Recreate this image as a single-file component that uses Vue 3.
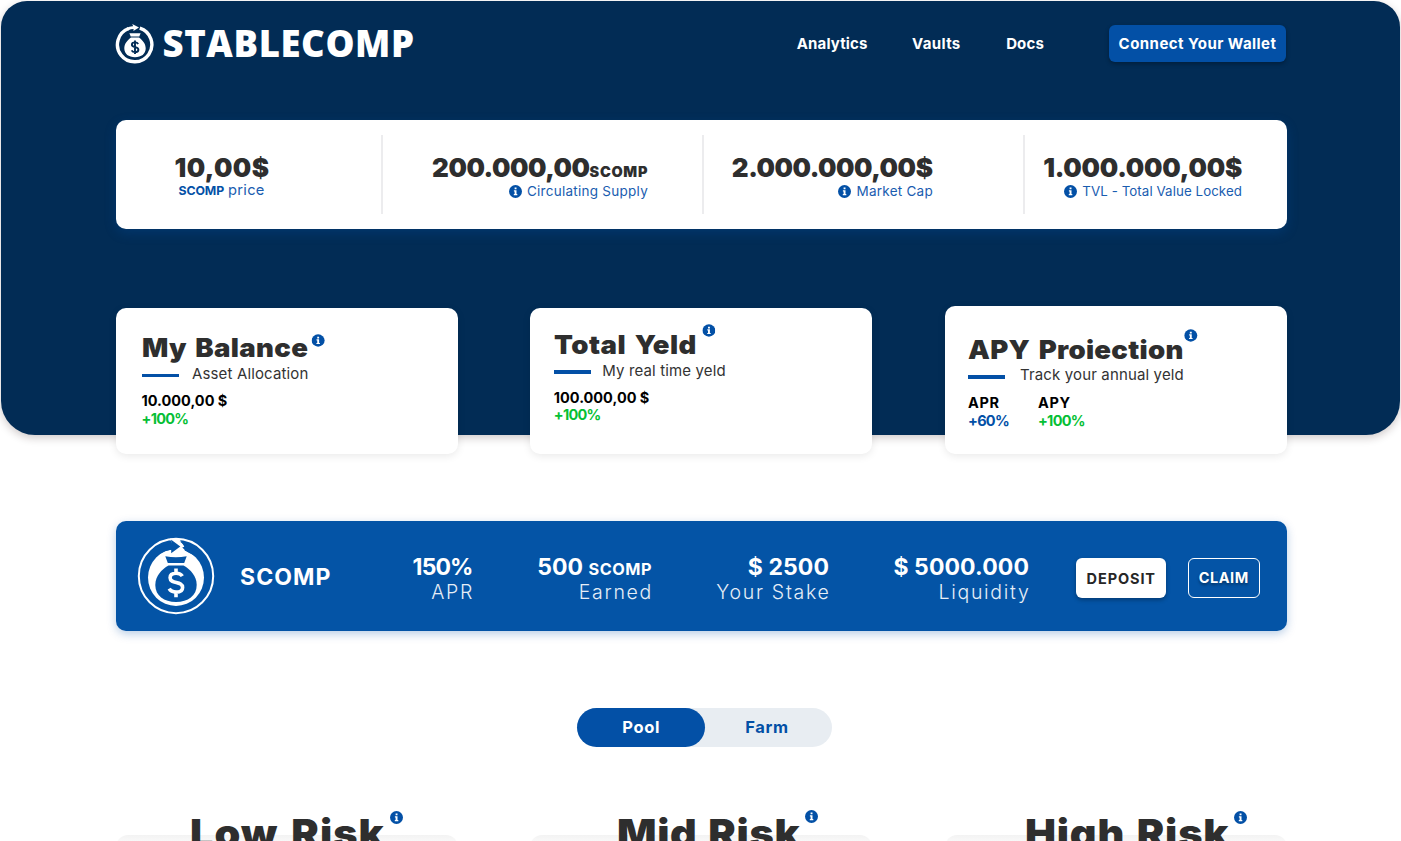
<script setup>
import { h } from 'vue'

const InfoIcon = () =>
  h('svg', { viewBox: '0 0 13 13', class: 'info' }, [
    h('circle', { cx: 6.5, cy: 6.5, r: 6.5, fill: '#0350a6' }),
    h('path', { d: 'M5.6 2.5h1.9v1.8H5.6zM4.9 5.2h2.6v3.9h.8v1.2H4.8V9.1h.8V6.4h-.7z', fill: '#fff' })
  ])

const nav = ['Analytics', 'Vaults', 'Docs']

const cards = [
  { id: 'balance', title: 'My Balance', sub: 'Asset Allocation', values: [{ label: '10.000,00 $', pct: '+100%' }] },
  { id: 'yield', title: 'Total Yeld', sub: 'My real time yeld', values: [{ label: '100.000,00 $', pct: '+100%' }] },
  { id: 'apy', title: 'APY Proiection', sub: 'Track your annual yeld', values: [{ label: 'APR', pct: '+60%', blue: true }, { label: 'APY', pct: '+100%' }] }
]

const risks = [
  { id: 'low', title: 'Low Risk' },
  { id: 'mid', title: 'Mid Risk' },
  { id: 'high', title: 'High Risk' }
]
</script>

<template>
  <div class="page">
    <section class="hero">
      <header class="topbar">
        <div class="brand">
          <svg class="brand-mark" viewBox="0 0 40 40">
            <path d="M24.800 4.200A17.200 17.200 0 1 1 13.600 4.500" fill="none" stroke="#fff" stroke-width="3.400" />
            <path d="M11.800 3.800Q15 1.900 18.200 2.200L17.200 0L24 3.600L18.400 7L18.600 5Q15.800 5 13 6.400Z" fill="#fff" />
            <path d="M14.400 9.300h11.200l-1.300 3.100h-8.600z" fill="#fff" />
            <path d="M16 13.500h8c3.600 2.700 6.700 6.300 6.700 10.800 0 5.800-4.300 8.900-10.700 8.900S9.300 30.100 9.300 24.300c0-4.500 3.100-8.100 6.700-10.800z" fill="#fff" />
            <path d="M23.200 19.900c-.6-1-1.700-1.500-3.200-1.500-1.900 0-3.100.9-3.100 2.300 0 3.400 6.500 1.500 6.500 5 0 1.500-1.300 2.400-3.300 2.400-1.600 0-2.900-.6-3.500-1.700M20 16.400v13.700" fill="none" stroke="#022c55" stroke-width="1.900" />
          </svg>
          <span class="brand-name">STABLECOMP</span>
        </div>
        <nav class="nav">
          <a v-for="item in nav" :key="item" :class="item.toLowerCase()">{{ item }}</a>
        </nav>
        <button class="wallet">Connect Your Wallet</button>
      </header>

      <div class="stats">
        <div class="stat price">
          <div class="figure">10,00$</div>
          <div class="caption"><b>SCOMP</b><span>price</span></div>
        </div>
        <div class="stat supply">
          <div class="figure">200.000,00<small>SCOMP</small></div>
          <div class="caption"><InfoIcon /><span>Circulating Supply</span></div>
        </div>
        <div class="stat cap">
          <div class="figure">2.000.000,00$</div>
          <div class="caption"><InfoIcon /><span>Market Cap</span></div>
        </div>
        <div class="stat tvl">
          <div class="figure">1.000.000,00$</div>
          <div class="caption"><InfoIcon /><span>TVL - Total Value Locked</span></div>
        </div>
      </div>
    </section>

    <section class="cards">
      <article v-for="c in cards" :key="c.id" class="card" :class="c.id">
        <h2>{{ c.title }}<InfoIcon /></h2>
        <div class="sub"><i class="bar"></i><span>{{ c.sub }}</span></div>
        <div class="values">
          <div v-for="v in c.values" :key="v.label" class="value">
            <div class="amount">{{ v.label }}</div>
            <div class="pct" :class="{ blue: v.blue }">{{ v.pct }}</div>
          </div>
        </div>
      </article>
    </section>

    <section class="band">
      <svg class="token" viewBox="0 0 78 78">
        <circle cx="39" cy="39" r="37.200" fill="none" stroke="#fff" stroke-width="2" />
        <ellipse cx="39" cy="40.600" rx="28" ry="28.400" fill="#fff" />
        <path d="M33 1.500H42L47 9L48 15L38 15Z" fill="#fff" />
        <path d="M11 24C15 14 24 7.500 34.200 6.500L34.200 2.800L43.300 9.500L34.200 16.200V12.700C27 13.500 21 16.500 15 24Z" fill="#0454a6" />
        <path d="M42.500 4.200L49 9.300L45.200 10.500L50 14.800L58 19C56 12 50 6.500 42.500 4.200Z" fill="#0454a6" />
        <path d="M28.300 19.300Q39 21.200 49.700 19.300L47.200 26H30.800Z" fill="#0454a6" />
        <path d="M31.500 28.600h15C53.500 32.500 59.700 39.500 59.700 48c0 10.700-8.700 17-20.700 17s-20.700-6.300-20.700-17c0-8.500 6.200-15.500 13.200-19.400z" fill="#0454a6" />
        <path d="M45.300 39.200c-1.100-2-3.200-3-6.200-3-3.700 0-6 1.700-6 4.500 0 6.700 12.500 2.900 12.500 9.700 0 3-2.600 4.700-6.500 4.700-3.200 0-5.700-1.200-6.900-3.400M39 31.500v4.700M39 55v5.200" fill="none" stroke="#fff" stroke-width="3.600" />
      </svg>
      <strong class="token-name">SCOMP</strong>
      <div class="metric m-apr"><b>150%</b><span>APR</span></div>
      <div class="metric m-earned"><b>500 <small>SCOMP</small></b><span>Earned</span></div>
      <div class="metric m-stake"><b>$ 2500</b><span>Your Stake</span></div>
      <div class="metric m-liq"><b>$ 5000.000</b><span>Liquidity</span></div>
      <button class="deposit">DEPOSIT</button>
      <button class="claim">CLAIM</button>
    </section>

    <div class="toggle">
      <button class="on">Pool</button>
      <button>Farm</button>
    </div>

    <section class="risks">
      <article v-for="r in risks" :key="r.id" class="risk" :class="r.id">
        <h2>{{ r.title }}</h2>
        <InfoIcon />
      </article>
    </section>
  </div>
</template>

<style>
body { background: #fff; overflow: hidden; }
</style>

<style scoped>
.page {
  width: 1401px;
  height: 841px;
  overflow: hidden;
  display: flow-root;
  box-sizing: border-box;
  font-family: Inter, "Open Sans", sans-serif;
  white-space: nowrap;
}
button { font: inherit; border: 0; padding: 0; box-sizing: border-box; }
h2 { margin: 0; }
.info { width: 13px; height: 13px; display: block; flex: none; }

.hero {
  box-sizing: border-box;
  width: 1399px;
  height: 434px;
  margin: 1px 0 0 1px;
  padding: 24px 113.500px 0 115px;
  background: #022c55;
  border-radius: 26px 26px 34px 34px;
  box-shadow: 0 3px 8px rgba(40, 20, 20, .22);
}
.topbar { display: flex; height: 36.500px; align-items: center; color: #fff; }
.brand { display: flex; align-items: center; width: 681px; }
.brand-mark { width: 40px; height: 40px; margin: 1px 0 0 -1px; }
.brand-name { font: 800 36.500px/40px "Open Sans", sans-serif; letter-spacing: .6px; margin: 0 0 0 7.500px; }
.nav { display: flex; font-weight: 650; font-size: 15px; width: 312px; margin-top: 1px; }
.nav a { letter-spacing: .15px; }
.nav .vaults { margin-left: 44.500px; letter-spacing: .35px; }
.nav .docs { margin-left: 45.500px; }
.wallet {
  width: 178px;
  height: 36.500px;
  border-radius: 6px;
  background: #0350a6;
  color: #fff;
  font-weight: 650;
  font-size: 15px;
  letter-spacing: .45px;
  padding-top: 1px;
  box-shadow: 0 2px 4px rgba(0, 0, 0, .3);
}

.stats {
  display: grid;
  grid-template-columns: 267px 321px 321px 1fr;
  height: 109.500px;
  margin-top: 58px;
  padding: 15.500px 0;
  box-sizing: border-box;
  background: #fff;
  border-radius: 10px;
  box-shadow: 0 4px 12px rgba(3, 80, 166, .3);
}
.stat { display: flex; flex-direction: column; align-items: flex-end; padding-top: 18.500px; box-sizing: border-box; border-right: 2px solid #ececee; }
.stat.price { align-items: flex-start; padding-left: 58.500px; }
.stat.supply { padding-right: 55px; }
.stat.cap { padding-right: 91px; }
.stat.tvl { padding-right: 45px; border-right: 0; }
.figure { height: 27px; font-weight: 900; font-size: 26px; line-height: 27px; color: #2e2e2e; letter-spacing: -.48px; margin-right: -.48px; }
.price .figure { letter-spacing: .4px; }
.tvl .figure { letter-spacing: -.24px; }
.figure small { font-size: 14.500px; line-height: 1; letter-spacing: .7px; margin-right: -.7px; }
.caption { display: flex; align-items: center; height: 21px; color: #1a5db0; font-size: 13.500px; letter-spacing: .26px; margin-right: -1px; }
.caption .info { margin-right: 5px; }
.caption b { font-size: 12.300px; letter-spacing: -.1px; margin: 1px 4px 0 4px; color: #0350a6; }
.price .caption { height: 19px; }
.price .caption span { font-size: 14.700px; }
.tvl .caption { font-size: 13.300px; letter-spacing: .08px; margin-right: -.5px; }

.cards { display: grid; grid-template-columns: repeat(3, 342px); justify-content: space-between; align-items: end; width: 1170.500px; height: 147.500px; margin: -129px 0 0 116px; }
.card { height: 146px; box-sizing: border-box; background: #fff; border-radius: 10px; padding: 26.500px 0 0 25.500px; box-shadow: 0 2px 8px rgba(0, 0, 0, .09); }
.card.yield { padding: 23px 0 0 23.500px; }
.card.apy { height: 147.500px; padding: 29.500px 0 0 23.500px; }
.card h2 { display: inline-flex; height: 28px; align-items: center; color: #2e2e2e; font-weight: 900; font-size: 26px; line-height: 28px; letter-spacing: .3px; word-spacing: 2.500px; transform: scaleX(1.060); transform-origin: 0 0; }
.card h2 .info { width: 12.300px; margin: -16px 0 0 3.500px; }
.yield h2 { letter-spacing: .45px; }
.yield h2 .info { margin: -29px 0 0 5px; }
.apy h2 { letter-spacing: .27px; }
.apy h2 .info { margin: -29px 0 0 1px; }
.sub { display: flex; align-items: center; height: 22px; margin-top: .5px; font-size: 15px; letter-spacing: .14px; color: #333; }
.bar { width: 37px; height: 3.500px; margin: 3.500px 13.500px 0 0; background: #0350a6; }
.yield .bar { margin-right: 11.500px; }
.apy .bar { margin: 5.500px 15px 0 0; }
.apy .sub { margin-top: -.5px; }
.values { display: flex; gap: 29px; margin-top: 7.500px; font-weight: 700; font-size: 14.500px; line-height: 17.500px; }
.amount { color: #000; }
.apy .values { margin-top: 9px; }
.apy .amount { letter-spacing: .6px; }
.pct { color: #06bf35; font-weight: 650; letter-spacing: -.7px; }
.pct.blue { color: #0350a6; }

.band { display: flex; align-items: center; width: 1170.500px; height: 109.500px; margin: 67.500px 0 0 116px; background: #0454a6; border-radius: 10px; color: #fff; box-shadow: 0 3px 10px rgba(3, 80, 166, .28); }
.token { width: 78px; height: 78px; margin-left: 21px; flex: none; }
.token-name { font-weight: 650; font-size: 23px; letter-spacing: 1.100px; width: 110px; margin: 3px 0 0 25px; }
.metric { display: flex; flex-direction: column; align-items: flex-end; flex: none; box-sizing: border-box; margin-top: 7.500px; }
.metric b { height: 25px; font-weight: 650; font-size: 23px; line-height: 25px; }
.metric span { font-weight: 300; font-size: 19.500px; line-height: 25px; letter-spacing: 1.700px; margin-right: -1.500px; color: #e6eef7; }
.metric small { font-size: 16.300px; line-height: 1; letter-spacing: .5px; margin-right: -.5px; }
.m-apr { width: 122.500px; }
.m-apr b { letter-spacing: -.9px; }
.m-earned { width: 179px; }
.m-stake { width: 177.500px; }
.m-stake b, .m-liq b { letter-spacing: .1px; }
.m-liq { width: 200px; }
.deposit, .claim { height: 40.500px; border-radius: 6px; font-weight: 650; flex: none; margin-top: 4.500px; }
.deposit { width: 89.500px; margin-left: 47px; background: #fff; color: #262626; font-size: 14.500px; letter-spacing: .9px; padding: 1px 0 0 1px; box-shadow: 0 2px 4px rgba(0, 0, 0, .3); }
.claim { width: 71.500px; margin-left: 22.500px; background: transparent; border: 1.500px solid #fff; color: #fff; font-size: 14.500px; letter-spacing: .5px; text-shadow: 0 2px 3px rgba(0, 0, 0, .4); padding-bottom: 2px; }

.toggle { display: flex; width: 255px; height: 38.500px; margin: 77.500px 0 0 577px; border-radius: 20px; background: #e8edf2; }
.toggle button { width: 127.500px; border-radius: 20px; background: transparent; color: #0350a6; font-weight: 650; font-size: 16.500px; letter-spacing: .7px; padding-right: 2.500px; }
.toggle .on { background: #0350a6; color: #fff; padding: 0 0 0 1px; }

.risks { display: grid; grid-template-columns: repeat(3, 342px); justify-content: space-between; width: 1170.500px; margin: 88px 0 0 116px; }
.risk { display: flex; align-items: flex-start; box-sizing: border-box; height: 200px; border-radius: 12px; background: linear-gradient(#f3f3f3, #fafafa 8px); padding-left: 73.500px; }
.risk h2 { width: 200.500px; margin-top: -22px; font-weight: 900; font-size: 39px; line-height: 40px; color: #2e2e2e; letter-spacing: 1px; word-spacing: 3.500px; transform: scaleX(1.060); transform-origin: 0 0; }
.risk .info { margin-top: -24px; }
.mid { padding-left: 86.500px; }
.mid h2 { width: 188px; letter-spacing: .6px; word-spacing: 2px; }
.mid .info { margin-top: -25px; }
.high { padding-left: 80px; }
.high h2 { width: 209px; letter-spacing: .75px; word-spacing: 2.500px; }
</style>
